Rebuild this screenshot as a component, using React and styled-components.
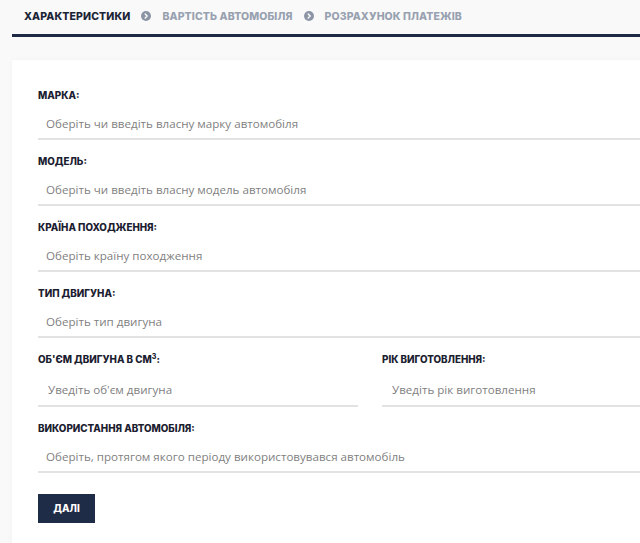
import React from 'react';
import styled, { createGlobalStyle } from 'styled-components';

const GlobalStyle = createGlobalStyle`
  html, body {
    margin: 0;
    padding: 0;
    background: #f9f9f9;
    overflow: hidden;
  }
  * { box-sizing: border-box; }
`;

const steps = ['ХАРАКТЕРИСТИКИ', 'ВАРТІСТЬ АВТОМОБІЛЯ', 'РОЗРАХУНОК ПЛАТЕЖІВ'];

function StepArrow() {
  return (
    <svg width="10" height="10" viewBox="0 0 10 10">
      <circle cx="5" cy="5" r="5" fill="#8c95a5" />
      <path d="M4.2 3 L6.2 5 L4.2 7" fill="none" stroke="#fff" strokeWidth="1.4" strokeLinecap="round" strokeLinejoin="round" />
    </svg>
  );
}

export default function App() {
  return (
    <Page>
      <GlobalStyle />
      <Steps>
        {steps.map((s, i) => (
          <React.Fragment key={s}>
            {i > 0 && <StepArrow />}
            <Step active={i === 0}>{s}</Step>
          </React.Fragment>
        ))}
      </Steps>
      <Card>
        <Field>
          <Label>Марка:</Label>
          <Input placeholder="Оберіть чи введіть власну марку автомобіля" />
        </Field>
        <Field>
          <Label>Модель:</Label>
          <Input placeholder="Оберіть чи введіть власну модель автомобіля" />
        </Field>
        <Field>
          <Label>Країна походження:</Label>
          <Input placeholder="Оберіть країну походження" />
        </Field>
        <Field>
          <Label>Тип двигуна:</Label>
          <Input placeholder="Оберіть тип двигуна" />
        </Field>
        <Row>
          <Field>
            <Label>Об'єм двигуна в см<sup>3</sup>:</Label>
            <Input half placeholder="Уведіть об'єм двигуна" />
          </Field>
          <Field>
            <Label>Рік виготовлення:</Label>
            <Input half placeholder="Уведіть рік виготовлення" />
          </Field>
        </Row>
        <Field>
          <Label>Використання автомобіля:</Label>
          <Input placeholder="Оберіть, протягом якого періоду використовувався автомобіль" />
        </Field>
        <NextBtn>Далі</NextBtn>
      </Card>
    </Page>
  );
}

const Page = styled.div`
  width: 720px;
  padding-left: 12px;
  font-family: 'Open Sans', 'Liberation Sans', sans-serif;
`;

const Steps = styled.div`
  display: flex;
  align-items: center;
  gap: 11px;
  height: 37px;
  padding: 0 0 2px 12px;
  border-bottom: 3px solid #1e2a45;
`;

const Step = styled.div`
  font-family: Inter, 'Liberation Sans', sans-serif;
  font-weight: 800;
  font-size: 10.5px;
  letter-spacing: 0.1px;
  color: ${p => (p.active ? '#1b2436' : '#98a1b0')};
`;

const Card = styled.div`
  margin-top: 23px;
  background: #fff;
  box-shadow: 0 0 6px rgba(0, 0, 0, 0.03);
  padding: 29px 26px 30px 26px;
`;

const Field = styled.div`
  display: flex;
  flex-direction: column;
  margin-bottom: 15px;
  min-width: 0;
`;

const Row = styled.div`
  display: grid;
  grid-template-columns: 320px 1fr;
  gap: 24px;
`;

const Label = styled.label`
  font-family: Inter, 'Liberation Sans', sans-serif;
  font-weight: 800;
  font-size: 9.8px;
  line-height: 14px;
  color: #1b2030;
  text-transform: uppercase;
  sup {
    font-size: 7px;
    line-height: 0;
    vertical-align: 4px;
  }
`;

const Input = styled.input`
  height: ${p => (p.half ? '40px' : '37px')};
  border: none;
  border-bottom: 2px solid #e2e2e2;
  padding: 6px 0 0 ${p => (p.half ? '10px' : '8px')};
  font-family: 'Open Sans', 'Liberation Sans', sans-serif;
  font-size: 11.6px;
  color: #333;
  outline: none;
  background: transparent;
  &::placeholder {
    color: #7f7f7f;
  }
`;

const NextBtn = styled.button`
  margin-top: 6px;
  width: 57px;
  height: 29px;
  border: none;
  background: #1f2c47;
  color: #fff;
  font-family: Inter, 'Liberation Sans', sans-serif;
  font-weight: 800;
  font-size: 9.8px;
  text-transform: uppercase;
  cursor: pointer;
`;
